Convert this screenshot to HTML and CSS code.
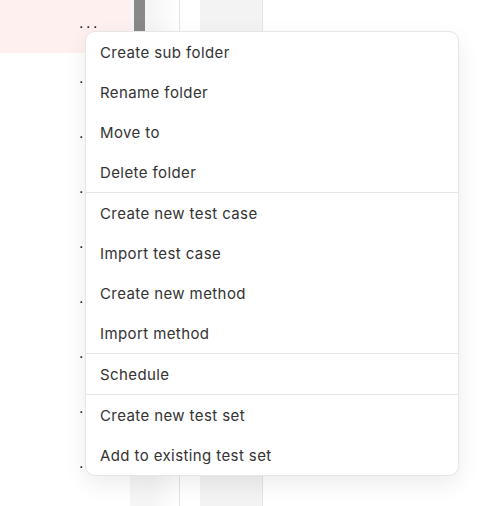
FILE: index.html
```html
<!DOCTYPE html>
<html>
<head>
<meta charset="utf-8">
<link rel="stylesheet" href="styles.css">
</head>
<body>
<div class="page">
  <div class="tree">
    <div class="row row-active"><span class="more">...</span></div>
    <div class="row"><span class="more">...</span></div>
    <div class="row"><span class="more">...</span></div>
    <div class="row"><span class="more">...</span></div>
    <div class="row"><span class="more">...</span></div>
    <div class="row"><span class="more">...</span></div>
    <div class="row"><span class="more">...</span></div>
    <div class="row"><span class="more">...</span></div>
    <div class="row"><span class="more">...</span></div>
  </div>
  <div class="scroll"><div class="thumb"></div></div>
  <div class="panel-fade"></div>
  <div class="gap"></div>
  <div class="panel-gray"></div>
  <div class="rest"></div>

  <div class="menu">
    <div class="group">
      <div class="item">Create sub folder</div>
      <div class="item">Rename folder</div>
      <div class="item">Move to</div>
      <div class="item">Delete folder</div>
    </div>
    <div class="group">
      <div class="item">Create new test case</div>
      <div class="item">Import test case</div>
      <div class="item">Create new method</div>
      <div class="item">Import method</div>
    </div>
    <div class="group">
      <div class="item">Schedule</div>
    </div>
    <div class="group">
      <div class="item">Create new test set</div>
      <div class="item">Add to existing test set</div>
    </div>
  </div>
</div>
</body>
</html>
```

FILE: styles.css
```css
* { box-sizing: border-box; }
html, body { margin: 0; padding: 0; background: #fff; }
body { font-family: Inter, "Open Sans", sans-serif; color: #333; }

.page {
  position: relative;
  width: 488px;
  height: 506px;
  display: flex;
  overflow: hidden;
}

.tree {
  width: 130px;
  flex: none;
  margin-top: -1px;
  display: flex;
  flex-direction: column;
}
.row {
  height: 55px;
  flex: none;
  display: flex;
  align-items: center;
  padding-left: 79px;
}
.row-active { background: #fdf0ee; height: 54px; }
.more {
  font-family: "DejaVu Sans", sans-serif;
  font-size: 14px;
  letter-spacing: 2.6px;
  line-height: 1;
  color: #111;
  transform: translateY(-3px);
}

.scroll {
  width: 19px;
  flex: none;
  background: #f5f5f5;
  padding: 0 4px;
}
.thumb { height: 120px; background: #888; }

.panel-fade {
  width: 31px;
  flex: none;
  background: linear-gradient(90deg, #f4f4f4, #ffffff);
  border-right: 1px solid #e3e3e3;
}
.gap { width: 20px; flex: none; }
.panel-gray {
  width: 63px;
  flex: none;
  background: #f3f3f3;
  border-right: 1px solid #e3e3e3;
}
.rest { flex: 1; }

.menu {
  position: absolute;
  left: 85px;
  top: 31px;
  width: 374px;
  background: #fff;
  border: 1px solid #e6e6e6;
  border-radius: 10px;
  box-shadow: 0 8px 22px rgba(0, 0, 0, 0.08);
}
.group + .group { border-top: 1px solid #e6e6e6; }
.item {
  height: 40px;
  display: flex;
  align-items: center;
  padding-left: 14px;
  font-size: 15px;
  letter-spacing: 0.4px;
}
```
